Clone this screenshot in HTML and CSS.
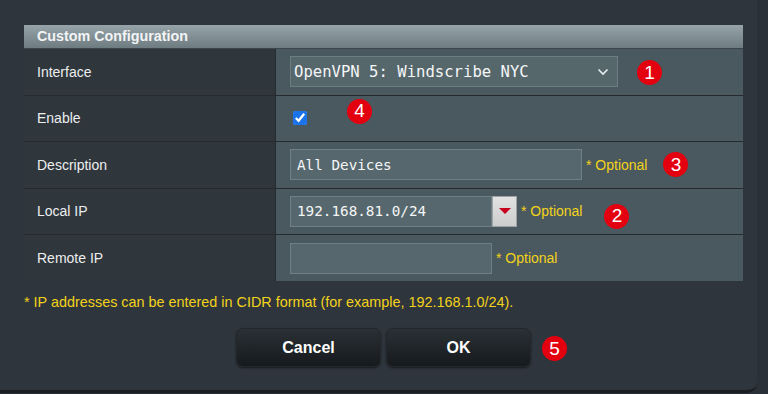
FILE: index.html
```html
<!DOCTYPE html>
<html>
  <head>
    <meta charset="UTF-8">
    <title>Custom Configuration</title>
    <link rel="stylesheet" href="styles.css">
  </head>
  <body>
    <div class="dialog">
      <div class="config">
        <div class="config-head">Custom Configuration</div>

        <div class="row">
          <div class="label">Interface</div>
          <div class="value">
            <div class="select">
              <span>OpenVPN 5: Windscribe NYC</span>
              <svg class="chevron" width="12" height="8" viewBox="0 0 12 8">
                <path d="M1.5 1.5 L6 6 L10.5 1.5" fill="none" stroke="#e8eef0" stroke-width="1.6"/>
              </svg>
            </div>
            <span class="badge badge-select">1</span>
          </div>
        </div>

        <div class="row">
          <div class="label">Enable</div>
          <div class="value">
            <input type="checkbox" class="check" checked>
            <span class="badge badge-check">4</span>
          </div>
        </div>

        <div class="row">
          <div class="label">Description</div>
          <div class="value">
            <input type="text" class="field field-wide" value="All Devices">
            <span class="hint">* Optional</span>
            <span class="badge badge-desc">3</span>
          </div>
        </div>

        <div class="row">
          <div class="label">Local IP</div>
          <div class="value">
            <input type="text" class="field field-ip" value="192.168.81.0/24">
            <button class="drop"><span class="tri"></span></button>
            <span class="hint">* Optional</span>
            <span class="badge badge-local">2</span>
          </div>
        </div>

        <div class="row">
          <div class="label">Remote IP</div>
          <div class="value">
            <input type="text" class="field field-ip" value="">
            <span class="hint">* Optional</span>
          </div>
        </div>
      </div>

      <p class="note">* IP addresses can be entered in CIDR format (for example, 192.168.1.0/24).</p>

      <div class="actions">
        <button class="btn">Cancel</button>
        <button class="btn btn-ok">OK<span class="badge badge-ok">5</span></button>
      </div>
    </div>
  </body>
</html>
```

FILE: styles.css
```css
/* page and dialog */
body {
  margin: 0;
  background-color: #2a3037;
  font-family: "Liberation Sans", Arial, sans-serif;
}

.dialog {
  width: 719px;
  height: 365px;
  padding: 25px 14px 0 24px;
  background-color: #2f353d;
  border-bottom: 3px solid #1a1d21;
  border-radius: 0 0 10px 0;
}

/* the settings table */
.config {
  background-color: #2f363c;
}

.config-head {
  height: 23px;
  line-height: 23px;
  padding-left: 13px;
  background: linear-gradient(#96a3a8, #6e7c82);
  border-bottom: 1px solid #3a444a;
  color: #f2f4f5;
  font-size: 14.3px;
  font-weight: bold;
}

.row {
  display: flex;
  height: 45.5px;
  border-bottom: 1px solid #252a2f;
}

.row:last-child {
  border-bottom: none;
  height: 46px;
}

.label {
  display: flex;
  align-items: center;
  width: 238px;
  padding-left: 13px;
  border-right: 1px solid #252a2f;
  color: #eceeef;
  font-size: 14px;
}

.value {
  display: flex;
  align-items: center;
  flex: 1;
  padding-left: 14px;
  background-color: #4a595f;
}

/* controls */
.select {
  display: flex;
  align-items: center;
  justify-content: space-between;
  box-sizing: border-box;
  width: 328px;
  height: 31px;
  padding: 0 8px 0 3px;
  background-color: #56676c;
  border: 1px solid #6c7c81;
  color: #f4f6f7;
  font-family: "DejaVu Sans Mono", monospace;
  font-size: 15.6px;
}

.field {
  box-sizing: border-box;
  height: 31px;
  padding: 0 6px;
  margin: 0;
  background-color: #56686d;
  border: 1px solid #6f8085;
  color: #f4f6f7;
  font-family: "DejaVu Sans Mono", monospace;
  font-size: 14.3px;
  outline: none;
}

.field-wide {
  width: 292px;
}

.field-ip {
  width: 202px;
}

.drop {
  box-sizing: border-box;
  width: 25px;
  height: 31px;
  margin: 0;
  padding: 0;
  background: linear-gradient(#e2e2e2, #cdcdcd);
  border: 1px solid #9da3a5;
  display: flex;
  align-items: center;
  justify-content: center;
}

.tri {
  width: 0;
  height: 0;
  border-left: 6px solid transparent;
  border-right: 6px solid transparent;
  border-top: 6px solid #c8001e;
}

.check {
  width: 14px;
  height: 14px;
  margin: 0 0 0 3px;
  accent-color: #1a73e8;
}

.hint {
  margin-left: 4px;
  color: #f2d31b;
  font-size: 14px;
}

/* numbered markers */
.badge {
  display: inline-flex;
  align-items: center;
  justify-content: center;
  width: 25px;
  height: 25px;
  border-radius: 50%;
  background-color: #e3000f;
  color: #fff;
  font-family: "Liberation Sans", Arial, sans-serif;
  font-size: 19px;
  font-weight: normal;
}

.badge-select {
  margin-left: 19px;
  position: relative;
  top: 1px;
}

.badge-check {
  margin-left: 40px;
  position: relative;
  top: -7px;
}

.badge-desc {
  margin-left: 16px;
}

.badge-local {
  margin-left: 22px;
  position: relative;
  top: 5px;
}

/* footnote and buttons */
.note {
  margin: 13px 0 0;
  color: #f2d31b;
  font-size: 14.4px;
}

.actions {
  display: flex;
  justify-content: center;
  gap: 5px;
  margin-top: 18px;
}

.btn {
  width: 145px;
  height: 39px;
  background: linear-gradient(#2b3036, #161a1d);
  border: 1px solid #22272b;
  border-radius: 7px;
  box-shadow: 0 1px 2px rgba(0, 0, 0, 0.5);
  color: #ffffff;
  font-family: "Liberation Sans", Arial, sans-serif;
  font-size: 16px;
  font-weight: bold;
}

.btn-ok {
  position: relative;
}

.badge-ok {
  position: absolute;
  left: 155px;
  top: 7px;
}
```
